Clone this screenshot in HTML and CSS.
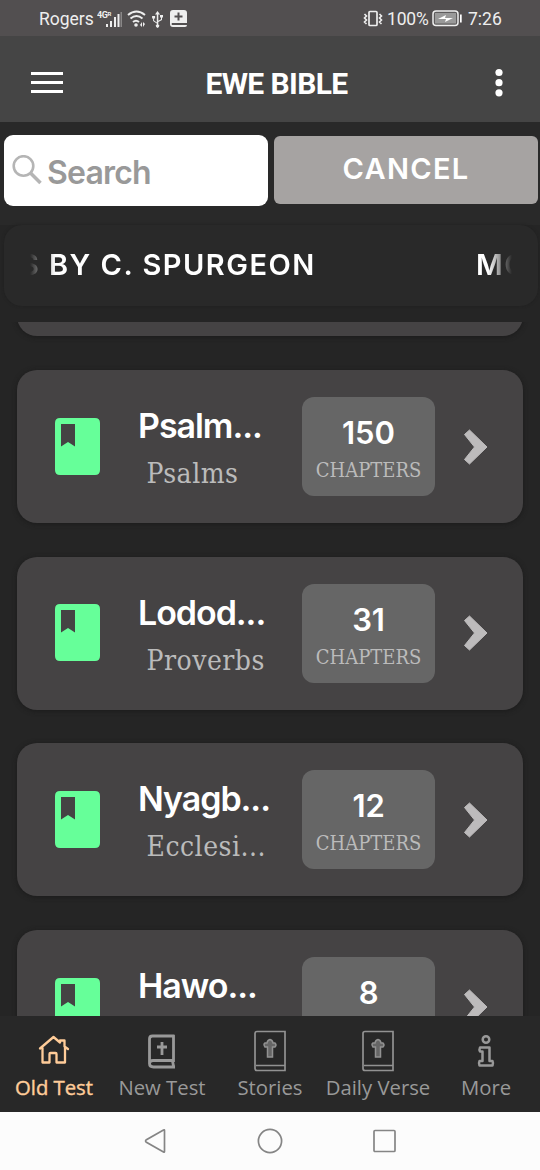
FILE: index.html
```html
<!DOCTYPE html>
<html lang="en">
<head>
<meta charset="utf-8">
<title>Ewe Bible</title>
<link rel="stylesheet" href="styles.css">
</head>
<body>
<svg class="defs" width="0" height="0">
  <symbol id="book" viewBox="0 0 45 57"><path fill="#66ff99" fill-rule="evenodd" d="M5 0H40Q45 0 45 5V52Q45 57 40 57H5Q0 57 0 52V5Q0 0 5 0ZM6 6V28.500L13 24L20 28.500V6Z"/></symbol>
  <symbol id="chevron" viewBox="0 0 26 38"><path fill="#bdbbbc" stroke="#bdbbbc" stroke-linejoin="round" d="M6.500 2L24 19L6.500 36L1.500 31.500L11.500 19L1.500 6.500Z"/></symbol>
  <symbol id="story" viewBox="0 0 32 42"><g fill="none" stroke="#929292"><path stroke-width="1.700" d="M3 1.500H31V40.500H3Q1 40.500 1 38.500V3.500Q1 1.500 3 1.500ZM2 35.500H31"/><path fill="#666" stroke-width="1.500" d="M13.500 27V17H11Q9 14 11 13H13Q13.500 10 16 9.500Q18.500 10 19 13H21Q23 15 21 17H18.500V27Z"/></g></symbol>
</svg>
<div class="screen">
  <div class="status">
    <span class="carrier">Rogers</span>
    <svg class="signals" width="92" height="22" viewBox="97 8 92 22" fill="#eee">
      <text class="tiny" x="97" y="18">4G</text><text class="tiny r" x="107.500" y="16">R</text>
      <path d="M106 24h2v3h-2zM110 21h2v6h-2zM114 17h2v10h-2zM117.500 14h2v13h-2z"/><path fill="#898787" d="M120.500 12h1.500v15h-1.500z"/>
      <g fill="none" stroke="#eee" stroke-width="2"><path d="M128 15Q136.500 8 145 15M130.500 18.500Q136.500 13.500 142.500 18.500M133 22Q136 19.500 139 22"/></g><circle cx="136" cy="25" r="1.800"/><path d="M140 25l2-3v5zm5-1-2-2v5z"/>
      <path d="M157.500 11l-2.500 3.500h1.800v8l-2.700-2v-2h1v-2.500h-3V18.500h1v2.500l3.700 2.500v1a1.700 1.700 0 1 0 1.500 0V22l3.700-2v-2.500h1V15h-3v2.500h1v1.700l-2.700 1.500V14.500h1.800z"/>
      <path fill-rule="evenodd" d="M173 10h11q3 0 3 3v10h-15q-1 1 0 2h15q0 2-2 2h-12q-3 0-3-3V13q0-3 3-3zm4.500 2.500v3h-3v2h3v3h2v-3h3v-2h-3v-3z"/>
    </svg>
    <svg class="vibrate" width="20" height="18" viewBox="0 0 20 18" fill="none" stroke="#eee"><rect x="6" y="1.500" width="8" height="14" rx="1" stroke-width="1.700"/><path stroke-width="1.600" d="M1.500 4l2 2-2 2 2 2-2 2 2 2M16.500 4l2 2-2 2 2 2-2 2 2 2"/></svg>
    <span class="percent">100%</span>
    <svg class="battery" width="31" height="18" viewBox="0 0 31 18"><rect x="1" y="1" width="25" height="14.500" rx="3" fill="#5e5c5d" stroke="#eee" stroke-width="1.500"/><rect x="3" y="3" width="21" height="10.500" fill="#999"/><path fill="#fff" d="M6 9l8-4-1 3h8l-8 4 1-3zM28 4.500h1.700v8H28z"/></svg>
    <span class="clock">7:26</span>
  </div>
  <header class="header">
    <svg class="menu" width="32" height="22" viewBox="0 0 32 22"><path fill="#fff" d="M0 0h32v3H0zm0 9h32v3H0zm0 9h32v3H0z"/></svg>
    <h1 class="app-title">EWE BIBLE</h1>
    <svg class="dots" width="8" height="30" viewBox="0 0 8 30" fill="#fff"><circle cx="4" cy="4.500" r="3.600"/><circle cx="4" cy="14.700" r="3.600"/><circle cx="4" cy="24.800" r="3.600"/></svg>
  </header>
  <div class="search-row">
    <div class="search"><svg width="30" height="30" viewBox="0 0 30 30" fill="none" stroke="#b5b5b5"><circle cx="11.500" cy="11" r="9.800" stroke-width="2.600"/><path stroke-width="3.500" d="M18.500 18L28.500 28"/></svg><span>Search</span></div>
    <div class="cancel"><span>CANCEL</span></div>
  </div>
  <div class="ticker"><div class="ticker-window"><span class="past">S</span><span class="current">BY C. SPURGEON</span><span class="next">MO</span></div></div>
  <main class="list">
    <div class="cards">
      <section class="card"></section>
      <section class="card"><svg class="book"><use href="#book"/></svg><div class="names"><div class="name">Psalm...</div><div class="sub">Psalms</div></div><div class="count"><b>150</b><span>CHAPTERS</span></div><svg class="chevron"><use href="#chevron"/></svg></section>
      <section class="card"><svg class="book"><use href="#book"/></svg><div class="names"><div class="name">Lodod...</div><div class="sub">Proverbs</div></div><div class="count"><b>31</b><span>CHAPTERS</span></div><svg class="chevron"><use href="#chevron"/></svg></section>
      <section class="card"><svg class="book"><use href="#book"/></svg><div class="names"><div class="name">Nyagb...</div><div class="sub">Ecclesi...</div></div><div class="count"><b>12</b><span>CHAPTERS</span></div><svg class="chevron"><use href="#chevron"/></svg></section>
      <section class="card"><svg class="book"><use href="#book"/></svg><div class="names"><div class="name">Hawo...</div></div><div class="count"><b>8</b></div><svg class="chevron"><use href="#chevron"/></svg></section>
    </div>
  </main>
  <nav class="tabs">
    <div class="tab active"><svg width="32" height="42" viewBox="0 0 32 42" fill="none" stroke="#ffcc99" stroke-width="2.300" stroke-linejoin="round" stroke-linecap="round"><path d="M2 18.500L15.500 7L22 12.500V10.500H26.500V16.500L30 19M4.500 18V32.500H11.500V24Q11.500 23 12.500 23H17.500Q18.500 23 18.500 24V32.500H27V17.500"/></svg><span>Old Test</span></div>
    <div class="tab"><svg width="32" height="42" viewBox="0 0 32 42" fill="none" stroke="#999" stroke-width="2.800"><path d="M28.500 6H6.500Q3.500 6 3.500 9V33.500Q3.500 37 7.500 37H29M27.500 5V30.500H7Q3.500 30.500 3.500 33.500M26.500 31L27.500 36"/><path d="M16 12V25M11 17H21"/></svg><span>New Test</span></div>
    <div class="tab"><svg width="32" height="42"><use href="#story"/></svg><span>Stories</span></div>
    <div class="tab"><svg width="32" height="42"><use href="#story"/></svg><span>Daily Verse</span></div>
    <div class="tab"><svg width="32" height="42" viewBox="0 0 32 42" fill="none" stroke="#999" stroke-width="2.500" stroke-linejoin="round"><circle cx="16" cy="9.500" r="3.300"/><path d="M10 17.500H19.500V31H22.500Q23.500 33 22.500 35.500H9.500Q8.500 33 9.500 31H12.500V21.500H10Q9 19.500 10 17.500Z"/></svg><span>More</span></div>
  </nav>
  <div class="system"><svg width="26" height="28" viewBox="0 0 26 28"><path d="M21.500 3.500V24.500Q21.500 25.500 20.500 25L3 15Q2 14 3 13L20.500 3Q21.500 2.500 21.500 3.500Z"/></svg><svg width="26" height="28" viewBox="0 0 26 28"><circle cx="13" cy="14" r="11.600"/></svg><svg width="26" height="28" viewBox="0 0 26 28"><rect x="2" y="3.500" width="21" height="21" rx="1"/></svg></div>
</div>
</body>
</html>
```
FILE: styles.css
```css
* { box-sizing: border-box; }
body { margin: 0; }
.defs { display: block; height: 0; }
.screen { width: 540px; height: 1170px; display: flex; flex-direction: column; overflow: hidden; background: #252525; font-family: Inter, sans-serif; color: #fff; }
svg { display: block; flex: none; }
span { white-space: nowrap; }
.status { height: 36px; flex: none; background: #524f50; display: flex; align-items: center; padding: 2px 0 0 39px; color: #eee; font: 17.500px/22px Roboto, sans-serif; }
.carrier { width: 58px; }
.tiny { font: bold 9px Roboto, sans-serif; letter-spacing: -.5px; }
.tiny.r { font-size: 6px; }
.vibrate { margin-left: 174px; }
.percent { margin-left: 4px; width: 42px; letter-spacing: -.2px; }
.battery { margin-left: 3px; }
.clock { margin-left: 5px; }
.header { height: 86px; flex: none; background: #454545; display: flex; align-items: center; padding: 8px 37px 0 31px; justify-content: space-between; }
.app-title { margin: 0 5px 0 0; padding-top: 2px; font: bold 30px/36px Roboto, sans-serif; letter-spacing: -.6px; }
.search-row { height: 103px; flex: none; padding: 13px 2px 0 4px; display: flex; gap: 6px; background: #292929; align-items: flex-start; }
.search { width: 264px; height: 71px; border-radius: 9px; background: #fff; display: flex; align-items: center; padding-left: 8px; color: #999; font-size: 32px; font-weight: 600; gap: 5px; }
.search svg { margin-top: -1px; }
.search span { padding-top: 3px; letter-spacing: -.8px; }
.cancel { width: 264px; height: 68px; margin-top: 1px; border-radius: 6px; background: #a6a3a2; display: flex; justify-content: center; align-items: center; font-size: 29px; font-weight: 600; letter-spacing: 1.300px; padding-bottom: 4px; }
.ticker { flex: none; height: 81px; margin: 0 2px 16px 4px; border-radius: 18px; background: #292929; padding: 0 26px; box-shadow: 0 0 3px #202020; }
.ticker-window { height: 81px; display: flex; overflow: hidden; align-items: center; padding-bottom: 2px; font-size: 29px; font-weight: 600; letter-spacing: 1.500px; mask-image: linear-gradient(90deg, transparent, #000 25px, #000 458px, transparent 482px); }
.past { width: 20px; margin-left: -10px; flex: none; }
.current { margin-left: 9px; width: 427px; flex: none; }
.next { flex: none; }
.list { height: 694px; flex: none; overflow: hidden; }
.cards { display: flex; flex-direction: column; gap: 33.670px; margin-top: -138.600px; padding: 0 17px; }
.card { height: 153px; flex: none; border-radius: 20px; background: #454344; box-shadow: 0 1px 5px #1b1b1b; display: flex; padding: 27px 0 0 38px; align-items: flex-start; }
.book { width: 45px; height: 57px; margin-top: 20.700px; }
.names { width: 164px; margin-left: 38px; flex: none; }
.name { font-size: 34px; line-height: 42px; margin-top: 8px; font-weight: 600; letter-spacing: -1.050px; }
.sub { font: 28px/36px "DejaVu Serif Condensed", "DejaVu Serif", serif; font-stretch: condensed; letter-spacing: .500px; color: #bbb; margin: 9px 0 0 8.500px; }
.count { width: 133px; height: 99px; flex: none; background: #666; border-radius: 12px; display: flex; flex-direction: column; align-items: center; }
.count b { font-size: 31px; line-height: 40px; font-weight: 600; letter-spacing: -.1px; margin-top: 16px; }
.count span { font: 20px/30px "DejaVu Serif Condensed", "DejaVu Serif", serif; font-stretch: condensed; color: #bbb; margin-top: 2px; }
.chevron { width: 26px; height: 38px; margin: 30.500px 0 0 27.500px; }
.tabs { height: 96px; flex: none; background: #282828; display: grid; grid-template-columns: repeat(5, 108px); padding-top: 14px; }
.tab { display: flex; flex-direction: column; align-items: center; color: #999; font: 20.300px/28px "Open Sans", sans-serif; }
.tab span { margin-top: 1px; }
.active { color: #ffcc99; }
.active span { -webkit-text-stroke: .4px #ffcc99; }
.system { height: 58px; flex: none; background: #fcfcfc; display: flex; justify-content: center; gap: 88.500px; padding-top: 15px; }
.system svg { fill: none; stroke: #858585; stroke-width: 1.700; }
```
